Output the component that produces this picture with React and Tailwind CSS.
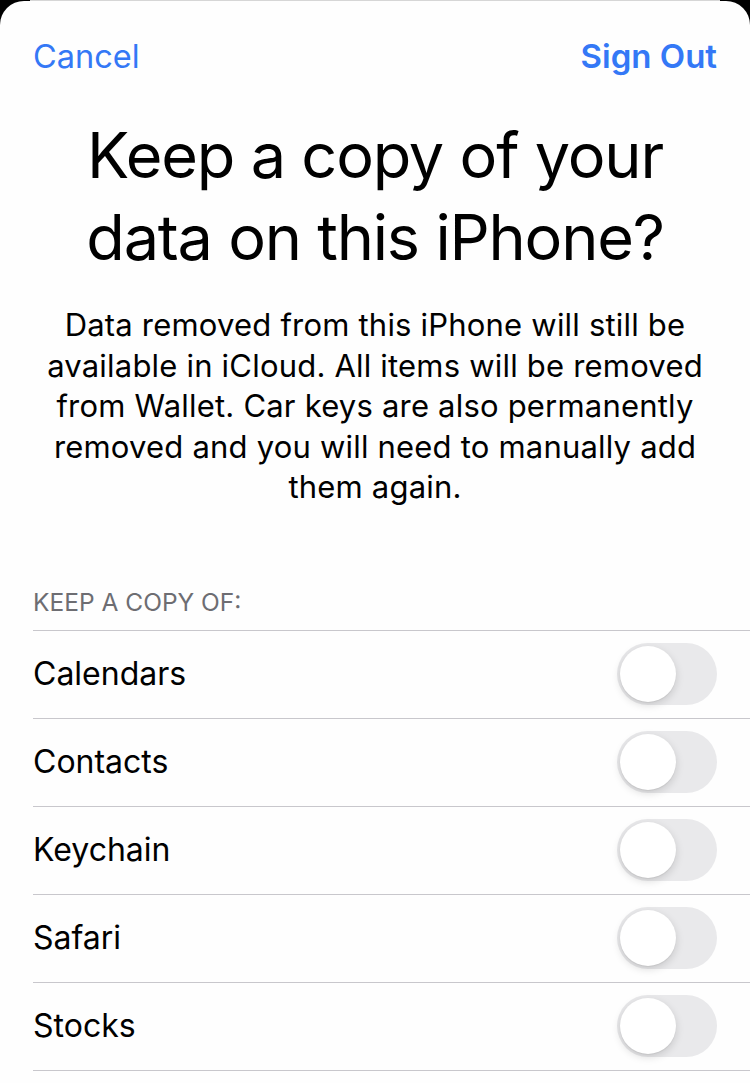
import React, { useState } from 'react';

const items = ['Calendars', 'Contacts', 'Keychain', 'Safari', 'Stocks'];

function Toggle({ on, onChange }) {
    return (
        <button
            type="button"
            onClick={onChange}
            className={`relative w-[100px] h-[62px] rounded-full shrink-0 transition-colors ${on ? 'bg-[#34c759]' : 'bg-[#e9e9eb]'}`}
        >
            <span
                className={`absolute top-[3px] w-[56px] h-[56px] rounded-full bg-white shadow-[0_3px_8px_rgba(0,0,0,0.15),0_1px_1px_rgba(0,0,0,0.06)] transition-all ${on ? 'left-[41px]' : 'left-[3px]'}`}
            />
        </button>
    );
}

export default function App() {
    const [kept, setKept] = useState({});

    return (
        <div className="min-h-[1083px] bg-black overflow-hidden" style={{ fontFamily: 'Inter, "Noto Sans", sans-serif' }}>
            {/* sliver of the screen behind the sheet */}
            <div className="h-[1px] mx-[30px] bg-[#d6d6d6]" />
            <div className="bg-[#fefefe] rounded-t-[24px] min-h-[1082px]">
                {/* nav bar */}
                <div className="flex items-center justify-between px-[33px] pt-[27px] h-[85px]">
                    <button className="text-[32.5px] text-[#3478f6]">Cancel</button>
                    <button className="text-[33px] font-semibold text-[#3478f6]">Sign Out</button>
                </div>

                <h1 className="mt-[28px] text-center text-[63px] leading-[82px] text-black tracking-[-1.2px]">
                    Keep a copy of your<br />data on this iPhone?
                </h1>

                <p className="mt-[27px] text-center text-[31px] leading-[40.5px] text-black tracking-[0.2px]">
                    Data removed from this iPhone will still be<br />
                    available in iCloud. All items will be removed<br />
                    from Wallet. Car keys are also permanently<br />
                    removed and you will need to manually add<br />
                    them again.
                </p>

                <div className="mt-[79px] pl-[33px]">
                    <div className="text-[24.5px] leading-[30px] text-[#6d6d72] pb-[13px]">KEEP A COPY OF:</div>
                    <div className="border-t border-[#c8c7cc]">
                        {items.map((name) => (
                            <div key={name} className="flex items-center justify-between h-[88px] border-b border-[#c8c7cc] pr-[33px]">
                                <span className="text-[32px] text-black">{name}</span>
                                <Toggle
                                    on={!!kept[name]}
                                    onChange={() => setKept((k) => ({ ...k, [name]: !k[name] }))}
                                />
                            </div>
                        ))}
                    </div>
                </div>
            </div>
        </div>
    );
}
